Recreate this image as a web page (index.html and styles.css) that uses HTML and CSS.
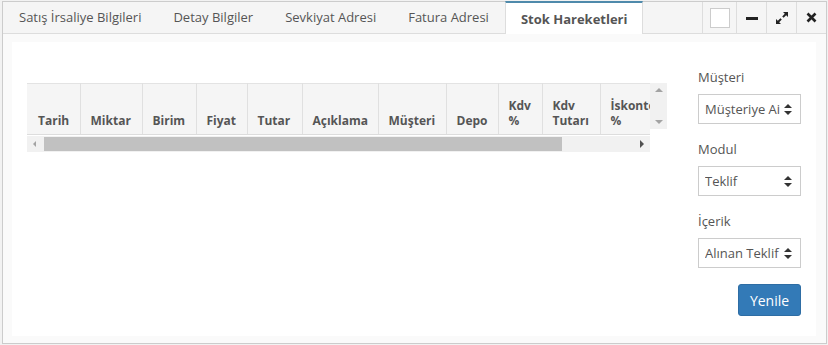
FILE: index.html
```html
<!DOCTYPE html>
<html lang="tr">
<head>
    <meta charset="UTF-8">
    <title>Stok Hareketleri</title>
    <link rel="stylesheet" href="styles.css">
</head>
<body>
<div class="window">
    <div class="tabbar">
        <div class="tab">Satış İrsaliye Bilgileri</div>
        <div class="tab">Detay Bilgiler</div>
        <div class="tab">Sevkiyat Adresi</div>
        <div class="tab">Fatura Adresi</div>
        <div class="tab active">Stok Hareketleri</div>

        <div class="controls">
            <div class="ctrl ctrl-check"><span class="checkbox"></span></div>
            <div class="ctrl">
                <svg width="12" height="12" viewBox="0 0 12 12"><rect x="0" y="5" width="12" height="3" fill="#222"/></svg>
            </div>
            <div class="ctrl">
                <svg width="12" height="12" viewBox="0 0 12 12">
                    <path d="M7 0h5v5l-1.8-1.8-2.6 2.6-1.4-1.4 2.6-2.6z" fill="#222"/>
                    <path d="M5 12H0V7l1.8 1.8 2.6-2.6 1.4 1.4-2.6 2.6z" fill="#222"/>
                </svg>
            </div>
            <div class="ctrl">
                <svg width="11" height="11" viewBox="0 0 11 11"><path d="M1.5 1.5l8 8M9.5 1.5l-8 8" stroke="#222" stroke-width="2.6"/></svg>
            </div>
        </div>
    </div>

    <div class="content">
        <div class="panel">
            <div class="grid-area">
                <div class="grid">
                    <div class="grid-top">
                        <div class="grid-view">
                            <table class="grid-table">
                                <colgroup>
                                    <col style="width:53px"><col style="width:62px"><col style="width:54px">
                                    <col style="width:51px"><col style="width:55px"><col style="width:76px">
                                    <col style="width:68px"><col style="width:52px"><col style="width:44px">
                                    <col style="width:58px"><col style="width:70px"><col style="width:70px">
                                </colgroup>
                                <thead>
                                <tr>
                                    <th>Tarih</th>
                                    <th>Miktar</th>
                                    <th>Birim</th>
                                    <th>Fiyat</th>
                                    <th>Tutar</th>
                                    <th>Açıklama</th>
                                    <th>Müşteri</th>
                                    <th>Depo</th>
                                    <th>Kdv<br>%</th>
                                    <th>Kdv<br>Tutarı</th>
                                    <th>İskonto<br>%</th>
                                    <th>İskonto<br>Tutarı</th>
                                </tr>
                                </thead>
                            </table>
                        </div>
                        <div class="vscroll">
                            <span class="arrow-up"></span>
                            <span class="arrow-down"></span>
                        </div>
                    </div>
                    <div class="hscroll">
                        <span class="arrow-left"></span>
                        <div class="hscroll-track"><div class="hscroll-thumb"></div></div>
                        <span class="arrow-right"></span>
                    </div>
                </div>
            </div>

            <div class="filters">
                <label class="field-label">Müşteri</label>
                <div class="select"><span class="select-text">Müşteriye Ait</span><span class="select-caret"></span></div>

                <label class="field-label">Modul</label>
                <div class="select"><span class="select-text">Teklif</span><span class="select-caret"></span></div>

                <label class="field-label">İçerik</label>
                <div class="select"><span class="select-text">Alınan Teklif</span><span class="select-caret"></span></div>

                <div class="actions">
                    <button class="btn-primary">Yenile</button>
                </div>
            </div>
        </div>
    </div>
</div>
</body>
</html>
```

FILE: styles.css
```css
body {
    margin: 0;
    background: #f2f2f2;
    font-family: 'Open Sans', 'Noto Sans', sans-serif;
    font-size: 13px;
    color: #555;
}

.window {
    margin: 1px 1px 0 2px;
    height: 341px;
    border: 1px solid #ccc;
    background: #fafafa;
    display: flex;
    flex-direction: column;
}

/* tab bar */
.tabbar {
    display: flex;
    height: 31px;
    background: #f5f5f5;
    border-bottom: 1px solid #ddd;
}

.tab {
    padding: 0 16px;
    line-height: 31px;
    color: #555;
    white-space: nowrap;
}

.tab.active {
    background: #fff;
    font-weight: 700;
    border-top: 2px solid #4f8aab;
    border-left: 1px solid #ddd;
    border-right: 1px solid #ddd;
    margin-top: -1px;
    margin-bottom: -1px;
    height: 31px;
    line-height: 33px;
    padding: 0 15px;
}

.controls {
    display: flex;
    margin-left: auto;
}

.ctrl {
    width: 29px;
    border-left: 1px solid #ddd;
    display: flex;
    align-items: center;
    justify-content: center;
}

.ctrl-check {
    width: 33px;
}

.checkbox {
    width: 18px;
    height: 18px;
    border: 1px solid #ccc;
    background: #fff;
}

/* content */
.content {
    flex: 1;
    padding: 8px 10px 7px 9px;
    display: flex;
}

.panel {
    flex: 1;
    background: #fff;
    display: flex;
    padding: 0 15px;
}

.grid-area {
    flex: 1;
    padding-top: 41px;
}

.grid {
    width: 640px;
}

.grid-top {
    display: flex;
}

.grid-view {
    width: 623px;
    overflow: hidden;
}

.grid-table {
    table-layout: fixed;
    width: 693px;
    border-collapse: collapse;
}

.grid-table th {
    height: 44px;
    padding: 0 10px 6px;
    background: #f5f5f5;
    border-top: 1px solid #e3e3e3;
    border-bottom: 1px solid #ddd;
    border-right: 1px solid #e0e0e0;
    text-align: left;
    vertical-align: bottom;
    font-size: 12px;
    font-weight: 700;
    line-height: 15px;
    color: #555;
    white-space: nowrap;
    overflow: hidden;
}

.grid-table th:first-child {
    padding-left: 11px;
}

.vscroll {
    width: 17px;
    height: 46px;
    background: #f1f1f1;
    display: flex;
    flex-direction: column;
    justify-content: space-between;
    align-items: center;
    padding: 5px 0;
    box-sizing: border-box;
}

.arrow-up {
    border-left: 4px solid transparent;
    border-right: 4px solid transparent;
    border-bottom: 4px solid #a3a3a3;
}

.arrow-down {
    border-left: 4px solid transparent;
    border-right: 4px solid transparent;
    border-top: 4px solid #a3a3a3;
}

.hscroll {
    width: 623px;
    height: 16px;
    margin-top: 1px;
    background: #f1f1f1;
    display: flex;
    align-items: center;
}

.arrow-left {
    margin: 0 8px 0 6px;
    border-top: 3px solid transparent;
    border-bottom: 3px solid transparent;
    border-right: 3px solid #a3a3a3;
}

.arrow-right {
    margin: 0 6px 0 5px;
    border-top: 4px solid transparent;
    border-bottom: 4px solid transparent;
    border-left: 4px solid #505050;
}

.hscroll-track {
    flex: 1;
    height: 14px;
}

.hscroll-thumb {
    width: 518px;
    height: 14px;
    background: #c1c1c1;
}

/* filters */
.filters {
    width: 103px;
    padding-top: 26px;
    margin-left: 30px;
    display: flex;
    flex-direction: column;
}

.field-label {
    display: block;
    line-height: 18px;
    margin-bottom: 8px;
    color: #555;
}

.select {
    height: 30px;
    border: 1px solid #ccc;
    box-sizing: border-box;
    display: flex;
    align-items: center;
    padding: 0 8px 0 6px;
    margin-bottom: 16px;
    color: #555;
}

.select-text {
    flex: 1;
    overflow: hidden;
    white-space: nowrap;
    margin-right: 4px;
}

.select-caret {
    position: relative;
    width: 8px;
    height: 11px;
    flex: none;
}

.select-caret::before,
.select-caret::after {
    content: "";
    position: absolute;
    left: 0;
    border-left: 4px solid transparent;
    border-right: 4px solid transparent;
}

.select-caret::before {
    top: 0;
    border-bottom: 4px solid #333;
}

.select-caret::after {
    bottom: 0;
    border-top: 4px solid #333;
}

.actions {
    display: flex;
    justify-content: flex-end;
}

.btn-primary {
    width: 63px;
    height: 32px;
    background: #337ab7;
    border: 1px solid #2e6da4;
    border-radius: 3px;
    color: #fff;
    font-family: 'Open Sans', 'Noto Sans', sans-serif;
    font-size: 14px;
    padding: 0;
}
```
